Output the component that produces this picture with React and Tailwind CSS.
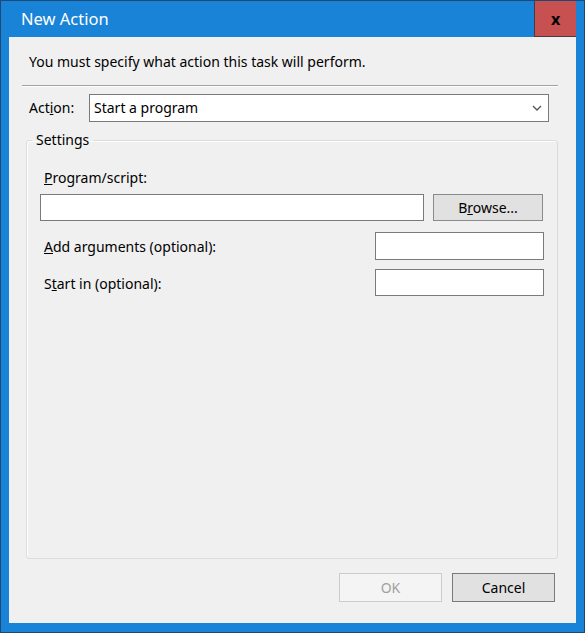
import React from "react";

const font = { fontFamily: '"Noto Sans", "Open Sans", sans-serif' };

function Field({ className = "" }) {
  return <div className={`h-[27px] bg-white border border-[#7a7a7a] ${className}`} />;
}

export default function App() {
  return (
    <div
      className="w-[585px] h-[633px] bg-[#1883d7] border border-[#1c4a73] flex flex-col text-[14px] leading-[18px] text-black"
      style={font}
    >
      {/* Title bar */}
      <div className="h-[36px] flex items-center justify-between">
        <span className="pl-[20px] text-white text-[16.5px]">New Action</span>
        <div className="w-[42px] h-[36px] bg-[#c75050] border-l border-b border-[#4d3a3a] mr-[8px] flex items-center justify-center">
          <span className="text-[16px] font-bold leading-none">x</span>
        </div>
      </div>

      {/* Client area */}
      <div className="mx-[8px] mb-[9px] flex-1 bg-[#f0f0f0] flex flex-col">
        <p className="pl-[20px] pt-[16px]">
          You must specify what action this task will perform.
        </p>

        <div className="ml-[13px] mr-[18px] mt-[14px] border-t border-[#a0a0a0] border-b border-b-white" />

        <div className="flex items-center mt-[7px] pl-[20px] pr-[27px]">
          <span className="w-[60px]">
            Act<u>i</u>on:
          </span>
          <div className="flex-1 h-[28px] bg-white border border-[#7a7a7a] flex items-center justify-between pl-[4px] pr-[6px]">
            <span>Start a program</span>
            <svg width="10" height="6" viewBox="0 0 10 6">
              <path d="M1 1l4 4 4-4" fill="none" stroke="#555" strokeWidth="1.3" />
            </svg>
          </div>
        </div>

        {/* Settings group */}
        <fieldset className="ml-[17px] mr-[18px] mt-[9px] h-[428px] border border-[#dcdcdc] rounded-[3px] shadow-[inset_1px_1px_0_#ffffff] px-[13px]">
          <legend className="-ml-[8px] px-[4px]">Settings</legend>

          <div className="mt-[20px] pl-[4px]">
            <u>P</u>rogram/script:
          </div>
          <div className="flex items-center mt-[7px]">
            <Field className="w-[384px]" />
            <button className="ml-[9px] w-[110px] h-[27px] bg-[#e1e1e1] border border-[#8a8a8a]">
              B<u>r</u>owse...
            </button>
          </div>

          <div className="flex items-center justify-between mt-[11px] pl-[4px]">
            <span className="pt-[2px]">
              <u>A</u>dd arguments (optional):
            </span>
            <Field className="w-[169px] h-[28px]" />
          </div>
          <div className="flex items-center justify-between mt-[9px] pl-[4px]">
            <span className="pt-[2px]">
              S<u>t</u>art in (optional):
            </span>
            <Field className="w-[169px]" />
          </div>
        </fieldset>

        {/* Buttons */}
        <div className="flex justify-end gap-[10px] mt-[14px] mr-[21px]">
          <button className="w-[103px] h-[29px] bg-[#f4f4f4] border border-[#cccccc] text-[#a0a0a0]">
            OK
          </button>
          <button className="w-[103px] h-[29px] bg-[#e1e1e1] border border-[#7a7a7a]">
            Cancel
          </button>
        </div>
      </div>
    </div>
  );
}
